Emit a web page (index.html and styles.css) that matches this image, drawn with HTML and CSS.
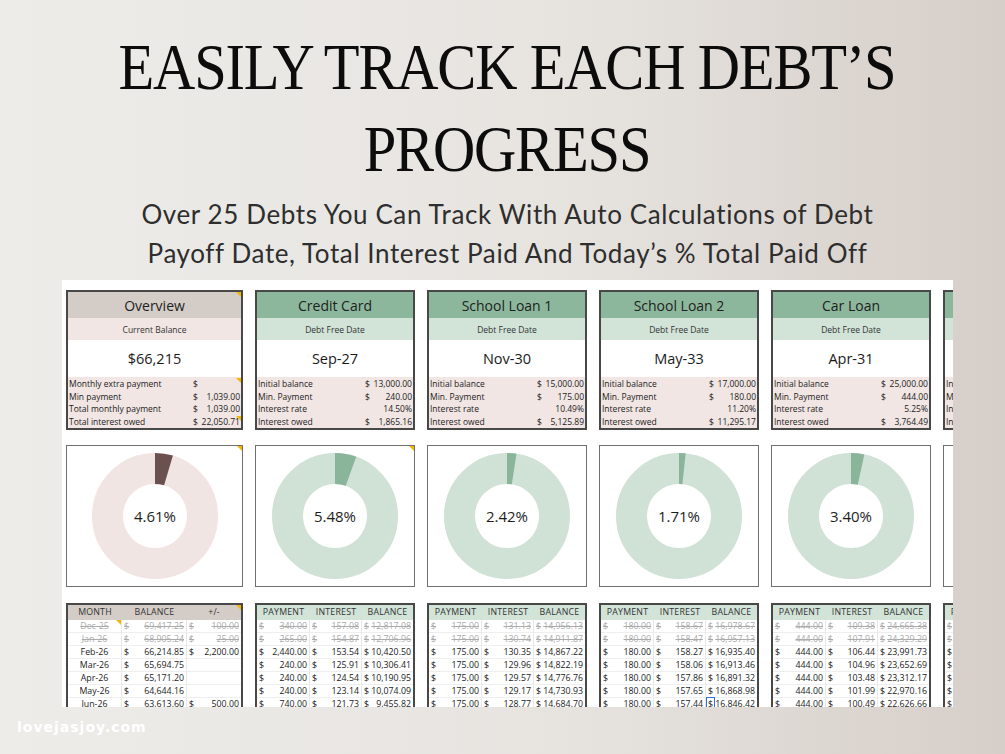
FILE: index.html
```html
<!DOCTYPE html>
<html lang="en">
<head>
<meta charset="utf-8">
<title>Easily Track Each Debt's Progress</title>
<link rel="stylesheet" href="styles.css">
</head>
<body>
<h1 class="title">EASILY TRACK EACH DEBT’S<br>PROGRESS</h1>
<p class="subtitle">Over 25 Debts You Can Track With Auto Calculations of Debt<br>Payoff Date, Total Interest Paid And Today’s % Total Paid Off</p>

<div class="sheet">
  <div class="cols">

    <!-- Overview -->
    <div class="col">
      <div class="card">
        <div class="card-head ov note">Overview</div>
        <div class="card-sub ov">Current Balance</div>
        <div class="card-value">$66,215</div>
        <div class="card-rows">
          <div class="row note"><span>Monthly extra payment</span><span class="amt"><span>$</span><span></span></span></div>
          <div class="row"><span>Min payment</span><span class="amt"><span>$</span><span>1,039.00</span></span></div>
          <div class="row"><span>Total monthly payment</span><span class="amt"><span>$</span><span>1,039.00</span></span></div>
          <div class="row note"><span>Total interest owed</span><span class="amt"><span>$</span><span>22,050.71</span></span></div>
        </div>
      </div>
      <div class="donut-box note">
        <svg class="donut" viewBox="0 0 126 126" width="126" height="126">
          <circle class="ring pink" cx="63" cy="63" r="47.5"/>
          <circle class="slice brown" cx="63" cy="63" r="47.5" pathLength="100" stroke-dasharray="4.61 100" transform="rotate(-90 63 63)"/>
          <text x="63" y="68.5" text-anchor="middle" class="pct">4.61%</text>
        </svg>
      </div>
      <div class="table ov-table">
        <div class="trow thead ov note"><span class="c">MONTH</span><span class="c">BALANCE</span><span class="c">+/-</span></div>
        <div class="trow old"><span class="c note">Dec-25</span><span class="m"><span>$</span><span>69,417.25</span></span><span class="m"><span>$</span><span>100.00</span></span></div>
        <div class="trow old"><span class="c">Jan-26</span><span class="m"><span>$</span><span>68,905.24</span></span><span class="m"><span>$</span><span>25.00</span></span></div>
        <div class="trow"><span class="c">Feb-26</span><span class="m"><span>$</span><span>66,214.85</span></span><span class="m"><span>$</span><span>2,200.00</span></span></div>
        <div class="trow"><span class="c">Mar-26</span><span class="m"><span>$</span><span>65,694.75</span></span><span class="m"></span></div>
        <div class="trow"><span class="c">Apr-26</span><span class="m"><span>$</span><span>65,171.20</span></span><span class="m"></span></div>
        <div class="trow"><span class="c">May-26</span><span class="m"><span>$</span><span>64,644.16</span></span><span class="m"></span></div>
        <div class="trow"><span class="c">Jun-26</span><span class="m"><span>$</span><span>63,613.60</span></span><span class="m"><span>$</span><span>500.00</span></span></div>
      </div>
    </div>

    <!-- Credit Card -->
    <div class="col">
      <div class="card">
        <div class="card-head">Credit Card</div>
        <div class="card-sub">Debt Free Date</div>
        <div class="card-value">Sep-27</div>
        <div class="card-rows">
          <div class="row"><span>Initial balance</span><span class="amt"><span>$</span><span>13,000.00</span></span></div>
          <div class="row"><span>Min. Payment</span><span class="amt"><span>$</span><span>240.00</span></span></div>
          <div class="row"><span>Interest rate</span><span class="amt end"><span>14.50%</span></span></div>
          <div class="row"><span>Interest owed</span><span class="amt"><span>$</span><span>1,865.16</span></span></div>
        </div>
      </div>
      <div class="donut-box note">
        <svg class="donut" viewBox="0 0 126 126" width="126" height="126">
          <circle class="ring green" cx="63" cy="63" r="47.5"/>
          <circle class="slice sage" cx="63" cy="63" r="47.5" pathLength="100" stroke-dasharray="5.48 100" transform="rotate(-90 63 63)"/>
          <text x="63" y="68.5" text-anchor="middle" class="pct">5.48%</text>
        </svg>
      </div>
      <div class="table">
        <div class="trow thead"><span class="c">PAYMENT</span><span class="c">INTEREST</span><span class="c">BALANCE</span></div>
        <div class="trow old"><span class="m"><span>$</span><span>340.00</span></span><span class="m"><span>$</span><span>157.08</span></span><span class="m"><span>$</span><span>12,817.08</span></span></div>
        <div class="trow old"><span class="m"><span>$</span><span>265.00</span></span><span class="m"><span>$</span><span>154.87</span></span><span class="m"><span>$</span><span>12,706.96</span></span></div>
        <div class="trow"><span class="m"><span>$</span><span>2,440.00</span></span><span class="m"><span>$</span><span>153.54</span></span><span class="m"><span>$</span><span>10,420.50</span></span></div>
        <div class="trow"><span class="m"><span>$</span><span>240.00</span></span><span class="m"><span>$</span><span>125.91</span></span><span class="m"><span>$</span><span>10,306.41</span></span></div>
        <div class="trow"><span class="m"><span>$</span><span>240.00</span></span><span class="m"><span>$</span><span>124.54</span></span><span class="m"><span>$</span><span>10,190.95</span></span></div>
        <div class="trow"><span class="m"><span>$</span><span>240.00</span></span><span class="m"><span>$</span><span>123.14</span></span><span class="m"><span>$</span><span>10,074.09</span></span></div>
        <div class="trow"><span class="m"><span>$</span><span>740.00</span></span><span class="m"><span>$</span><span>121.73</span></span><span class="m"><span>$</span><span>9,455.82</span></span></div>
      </div>
    </div>

    <!-- School Loan 1 -->
    <div class="col">
      <div class="card">
        <div class="card-head">School Loan 1</div>
        <div class="card-sub">Debt Free Date</div>
        <div class="card-value">Nov-30</div>
        <div class="card-rows">
          <div class="row"><span>Initial balance</span><span class="amt"><span>$</span><span>15,000.00</span></span></div>
          <div class="row"><span>Min. Payment</span><span class="amt"><span>$</span><span>175.00</span></span></div>
          <div class="row"><span>Interest rate</span><span class="amt end"><span>10.49%</span></span></div>
          <div class="row"><span>Interest owed</span><span class="amt"><span>$</span><span>5,125.89</span></span></div>
        </div>
      </div>
      <div class="donut-box">
        <svg class="donut" viewBox="0 0 126 126" width="126" height="126">
          <circle class="ring green" cx="63" cy="63" r="47.5"/>
          <circle class="slice sage" cx="63" cy="63" r="47.5" pathLength="100" stroke-dasharray="2.42 100" transform="rotate(-90 63 63)"/>
          <text x="63" y="68.5" text-anchor="middle" class="pct">2.42%</text>
        </svg>
      </div>
      <div class="table">
        <div class="trow thead"><span class="c">PAYMENT</span><span class="c">INTEREST</span><span class="c">BALANCE</span></div>
        <div class="trow old"><span class="m"><span>$</span><span>175.00</span></span><span class="m"><span>$</span><span>131.13</span></span><span class="m"><span>$</span><span>14,956.13</span></span></div>
        <div class="trow old"><span class="m"><span>$</span><span>175.00</span></span><span class="m"><span>$</span><span>130.74</span></span><span class="m"><span>$</span><span>14,911.87</span></span></div>
        <div class="trow"><span class="m"><span>$</span><span>175.00</span></span><span class="m"><span>$</span><span>130.35</span></span><span class="m"><span>$</span><span>14,867.22</span></span></div>
        <div class="trow"><span class="m"><span>$</span><span>175.00</span></span><span class="m"><span>$</span><span>129.96</span></span><span class="m"><span>$</span><span>14,822.19</span></span></div>
        <div class="trow"><span class="m"><span>$</span><span>175.00</span></span><span class="m"><span>$</span><span>129.57</span></span><span class="m"><span>$</span><span>14,776.76</span></span></div>
        <div class="trow"><span class="m"><span>$</span><span>175.00</span></span><span class="m"><span>$</span><span>129.17</span></span><span class="m"><span>$</span><span>14,730.93</span></span></div>
        <div class="trow"><span class="m"><span>$</span><span>175.00</span></span><span class="m"><span>$</span><span>128.77</span></span><span class="m"><span>$</span><span>14,684.70</span></span></div>
      </div>
    </div>

    <!-- School Loan 2 -->
    <div class="col">
      <div class="card">
        <div class="card-head">School Loan 2</div>
        <div class="card-sub">Debt Free Date</div>
        <div class="card-value">May-33</div>
        <div class="card-rows">
          <div class="row"><span>Initial balance</span><span class="amt"><span>$</span><span>17,000.00</span></span></div>
          <div class="row"><span>Min. Payment</span><span class="amt"><span>$</span><span>180.00</span></span></div>
          <div class="row"><span>Interest rate</span><span class="amt end"><span>11.20%</span></span></div>
          <div class="row"><span>Interest owed</span><span class="amt"><span>$</span><span>11,295.17</span></span></div>
        </div>
      </div>
      <div class="donut-box">
        <svg class="donut" viewBox="0 0 126 126" width="126" height="126">
          <circle class="ring green" cx="63" cy="63" r="47.5"/>
          <circle class="slice sage" cx="63" cy="63" r="47.5" pathLength="100" stroke-dasharray="1.71 100" transform="rotate(-90 63 63)"/>
          <text x="63" y="68.5" text-anchor="middle" class="pct">1.71%</text>
        </svg>
      </div>
      <div class="table">
        <div class="trow thead"><span class="c">PAYMENT</span><span class="c">INTEREST</span><span class="c">BALANCE</span></div>
        <div class="trow old"><span class="m"><span>$</span><span>180.00</span></span><span class="m"><span>$</span><span>158.67</span></span><span class="m"><span>$</span><span>16,978.67</span></span></div>
        <div class="trow old"><span class="m"><span>$</span><span>180.00</span></span><span class="m"><span>$</span><span>158.47</span></span><span class="m"><span>$</span><span>16,957.13</span></span></div>
        <div class="trow"><span class="m"><span>$</span><span>180.00</span></span><span class="m"><span>$</span><span>158.27</span></span><span class="m"><span>$</span><span>16,935.40</span></span></div>
        <div class="trow"><span class="m"><span>$</span><span>180.00</span></span><span class="m"><span>$</span><span>158.06</span></span><span class="m"><span>$</span><span>16,913.46</span></span></div>
        <div class="trow"><span class="m"><span>$</span><span>180.00</span></span><span class="m"><span>$</span><span>157.86</span></span><span class="m"><span>$</span><span>16,891.32</span></span></div>
        <div class="trow"><span class="m"><span>$</span><span>180.00</span></span><span class="m"><span>$</span><span>157.65</span></span><span class="m"><span>$</span><span>16,868.98</span></span></div>
        <div class="trow"><span class="m"><span>$</span><span>180.00</span></span><span class="m"><span>$</span><span>157.44</span></span><span class="m"><span class="sel">$</span><span>16,846.42</span></span></div>
      </div>
    </div>

    <!-- Car Loan -->
    <div class="col">
      <div class="card">
        <div class="card-head">Car Loan</div>
        <div class="card-sub">Debt Free Date</div>
        <div class="card-value">Apr-31</div>
        <div class="card-rows">
          <div class="row"><span>Initial balance</span><span class="amt"><span>$</span><span>25,000.00</span></span></div>
          <div class="row"><span>Min. Payment</span><span class="amt"><span>$</span><span>444.00</span></span></div>
          <div class="row"><span>Interest rate</span><span class="amt end"><span>5.25%</span></span></div>
          <div class="row"><span>Interest owed</span><span class="amt"><span>$</span><span>3,764.49</span></span></div>
        </div>
      </div>
      <div class="donut-box">
        <svg class="donut" viewBox="0 0 126 126" width="126" height="126">
          <circle class="ring green" cx="63" cy="63" r="47.5"/>
          <circle class="slice sage" cx="63" cy="63" r="47.5" pathLength="100" stroke-dasharray="3.40 100" transform="rotate(-90 63 63)"/>
          <text x="63" y="68.5" text-anchor="middle" class="pct">3.40%</text>
        </svg>
      </div>
      <div class="table">
        <div class="trow thead"><span class="c">PAYMENT</span><span class="c">INTEREST</span><span class="c">BALANCE</span></div>
        <div class="trow old"><span class="m"><span>$</span><span>444.00</span></span><span class="m"><span>$</span><span>109.38</span></span><span class="m"><span>$</span><span>24,665.38</span></span></div>
        <div class="trow old"><span class="m"><span>$</span><span>444.00</span></span><span class="m"><span>$</span><span>107.91</span></span><span class="m"><span>$</span><span>24,329.29</span></span></div>
        <div class="trow"><span class="m"><span>$</span><span>444.00</span></span><span class="m"><span>$</span><span>106.44</span></span><span class="m"><span>$</span><span>23,991.73</span></span></div>
        <div class="trow"><span class="m"><span>$</span><span>444.00</span></span><span class="m"><span>$</span><span>104.96</span></span><span class="m"><span>$</span><span>23,652.69</span></span></div>
        <div class="trow"><span class="m"><span>$</span><span>444.00</span></span><span class="m"><span>$</span><span>103.48</span></span><span class="m"><span>$</span><span>23,312.17</span></span></div>
        <div class="trow"><span class="m"><span>$</span><span>444.00</span></span><span class="m"><span>$</span><span>101.99</span></span><span class="m"><span>$</span><span>22,970.16</span></span></div>
        <div class="trow"><span class="m"><span>$</span><span>444.00</span></span><span class="m"><span>$</span><span>100.49</span></span><span class="m"><span>$</span><span>22,626.66</span></span></div>
      </div>
    </div>

    <!-- Partially visible column -->
    <div class="col">
      <div class="card">
        <div class="card-head">Personal Loan</div>
        <div class="card-sub">Debt Free Date</div>
        <div class="card-value">Jan-29</div>
        <div class="card-rows">
          <div class="row"><span>Initial balance</span><span class="amt"><span>$</span><span>8,000.00</span></span></div>
          <div class="row"><span>Min. Payment</span><span class="amt"><span>$</span><span>150.00</span></span></div>
          <div class="row"><span>Interest rate</span><span class="amt end"><span>8.00%</span></span></div>
          <div class="row"><span>Interest owed</span><span class="amt"><span>$</span><span>1,120.40</span></span></div>
        </div>
      </div>
      <div class="donut-box">
        <svg class="donut" viewBox="0 0 126 126" width="126" height="126">
          <circle class="ring green" cx="63" cy="63" r="47.5"/>
          <circle class="slice sage" cx="63" cy="63" r="47.5" pathLength="100" stroke-dasharray="3.10 100" transform="rotate(-90 63 63)"/>
          <text x="63" y="68.5" text-anchor="middle" class="pct">3.10%</text>
        </svg>
      </div>
      <div class="table">
        <div class="trow thead"><span class="c">PAYMENT</span><span class="c">INTEREST</span><span class="c">BALANCE</span></div>
        <div class="trow old"><span class="m"><span>$</span><span>150.00</span></span><span class="m"><span>$</span><span>53.33</span></span><span class="m"><span>$</span><span>7,903.33</span></span></div>
        <div class="trow old"><span class="m"><span>$</span><span>150.00</span></span><span class="m"><span>$</span><span>52.69</span></span><span class="m"><span>$</span><span>7,806.02</span></span></div>
        <div class="trow"><span class="m"><span>$</span><span>150.00</span></span><span class="m"><span>$</span><span>52.04</span></span><span class="m"><span>$</span><span>7,708.06</span></span></div>
        <div class="trow"><span class="m"><span>$</span><span>150.00</span></span><span class="m"><span>$</span><span>51.39</span></span><span class="m"><span>$</span><span>7,609.45</span></span></div>
        <div class="trow"><span class="m"><span>$</span><span>150.00</span></span><span class="m"><span>$</span><span>50.73</span></span><span class="m"><span>$</span><span>7,510.18</span></span></div>
        <div class="trow"><span class="m"><span>$</span><span>150.00</span></span><span class="m"><span>$</span><span>50.07</span></span><span class="m"><span>$</span><span>7,410.25</span></span></div>
        <div class="trow"><span class="m"><span>$</span><span>150.00</span></span><span class="m"><span>$</span><span>49.40</span></span><span class="m"><span>$</span><span>7,309.65</span></span></div>
      </div>
    </div>

  </div>
</div>

<div class="brand">lovejasjoy.com</div>
</body>
</html>
```

FILE: styles.css
```css
* { box-sizing: border-box; }

body {
  margin: 0;
  width: 1005px;
  height: 754px;
  overflow: hidden;
  background: linear-gradient(90deg, #edece9 0%, #e7e4e0 55%, #d6cec9 100%);
  font-family: "Open Sans", "DejaVu Sans", sans-serif;
  color: #222;
}

.title {
  margin: 0;
  padding: 26px 0 0 10px;
  text-align: center;
  font-family: "Liberation Serif", "DejaVu Serif", serif;
  font-weight: 400;
  font-size: 65px;
  line-height: 82px;
  letter-spacing: -1.3px;
  color: #0c0c0c;
  transform: scaleX(0.9);
}

.subtitle {
  margin: 5px 0 0;
  padding-left: 10px;
  text-align: center;
  font-family: Lato, "Open Sans", sans-serif;
  font-size: 26px;
  line-height: 39px;
  letter-spacing: 0.6px;
  color: #2e2e2e;
}

.sheet {
  margin: 7px 0 0 62px;
  width: 891px;
  height: 427px;
  background: #fff;
  overflow: hidden;
  padding: 10px 0 0 4px;
}

.cols {
  display: grid;
  grid-template-columns: 177px repeat(5, 160px);
  column-gap: 12px;
}

.col {
  display: flex;
  flex-direction: column;
}

/* summary card */
.card {
  height: 140px;
  border: 2px solid #484848;
  display: flex;
  flex-direction: column;
}

.card-head {
  height: 26px;
  display: flex;
  align-items: center;
  justify-content: center;
  font-size: 14px;
  background: #8db79c;
  color: #1e1e1e;
}
.card-head.ov { background: #d4ccc6; }

.card-sub {
  height: 22px;
  display: flex;
  align-items: center;
  justify-content: center;
  font-size: 8.5px;
  background: #d2e3d8;
  color: #333;
}
.card-sub.ov { background: #f1e6e4; }

.card-value {
  height: 37px;
  display: flex;
  align-items: center;
  justify-content: center;
  font-size: 14.5px;
  background: #fff;
  color: #1a1a1a;
}

.card-rows {
  flex: 1;
  background: #f1e6e4;
  padding-top: 1px;
}

.row {
  display: grid;
  grid-template-columns: 1fr 48px;
  height: 12.5px;
  line-height: 12.5px;
  font-size: 8.5px;
  padding-left: 1px;
  color: #222;
}

.amt {
  display: flex;
  justify-content: space-between;
  padding-right: 1px;
}
.amt.end { justify-content: flex-end; }

/* donut */
.donut-box {
  margin-top: 15px;
  height: 142px;
  border: 1px solid #707070;
  display: flex;
  align-items: center;
  justify-content: center;
  background: #fff;
}

.ring, .slice { fill: none; stroke-width: 31; }
.ring.pink { stroke: #f1e5e3; }
.ring.green { stroke: #d0e1d6; }
.slice.brown { stroke: #6b5050; }
.slice.sage { stroke: #8ab59a; }

.pct {
  font-family: "Open Sans", sans-serif;
  font-size: 15px;
  fill: #1e1e1e;
}

/* tables */
.table {
  margin-top: 16px;
  height: 140px;
  border: 2px solid #484848;
  border-bottom: none;
}

.trow {
  display: grid;
  grid-template-columns: 53px 52px 1fr;
  height: 13px;
  line-height: 12px;
  font-size: 8.8px;
  color: #222;
}
.ov-table .trow { grid-template-columns: 54px 65px 1fr; }

.trow > span {
  border-right: 1px solid #e8e8e8;
  border-bottom: 1px solid #eeeeee;
  padding: 0 2px;
}
.trow > span:last-child { border-right: none; }

.trow.thead {
  height: 15px;
  line-height: 15px;
  background: #d2e3d8;
  color: #333;
  font-size: 8.8px;
  letter-spacing: 0.2px;
}
.trow.thead.ov { background: #d4ccc6; }
.trow.thead > span { border: none; }

.c { text-align: center; }

.m {
  display: flex;
  justify-content: space-between;
}

.trow.old {
  color: #ababab;
  text-decoration: line-through;
}

.sel {
  outline: 1.5px solid #2f6fd6;
  outline-offset: 0;
  padding: 0 1px;
  margin-left: -1px;
}

/* comment markers */
.note { position: relative; }
.note::after {
  content: "";
  position: absolute;
  top: 0;
  right: 0;
  border-top: 5px solid #f2b705;
  border-left: 5px solid transparent;
}

.brand {
  margin: 10px 0 0 17px;
  font-family: "DejaVu Sans", sans-serif;
  font-weight: bold;
  font-size: 14px;
  line-height: 20px;
  letter-spacing: 1px;
  color: #fff;
}
```
